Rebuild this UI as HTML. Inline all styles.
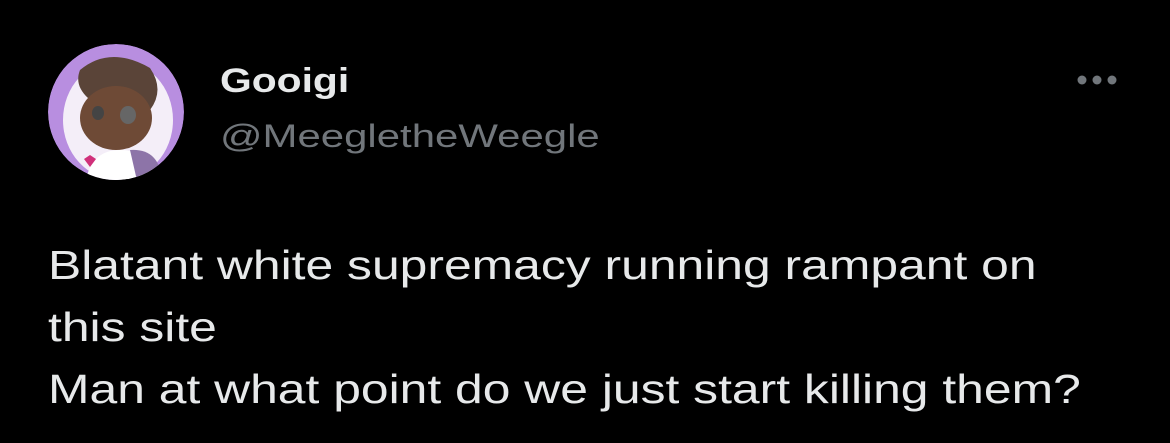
<!DOCTYPE html>
<html><head><style>
body{margin:0;width:1170px;height:443px;background:#000;overflow:hidden;font-family:"Liberation Sans",sans-serif;position:relative}
.t{position:absolute;white-space:nowrap;transform-origin:0 0}
</style></head><body>
<svg class="t" style="left:0;top:0" width="200" height="200">
<defs><clipPath id="c"><circle cx="116" cy="112" r="68"/></clipPath></defs>
<g clip-path="url(#c)">
<circle cx="116" cy="112" r="68" fill="#b88ee0"/>
<ellipse cx="118" cy="120" rx="55" ry="60" fill="#f4eef8"/>
<path d="M85 185 Q90 150 120 150 Q150 150 160 185 Z" fill="#fff"/>
<path d="M130 150 Q158 148 162 178 L138 185 Z" fill="#8d74a8"/>
<path d="M80 70 Q110 45 150 68 Q165 90 150 110 Q120 85 88 98 Q74 85 80 70Z" fill="#5a4438"/>
<ellipse cx="116" cy="118" rx="36" ry="32" fill="#6e4a36"/>
<ellipse cx="128" cy="115" rx="8" ry="9" fill="#666"/>
<ellipse cx="98" cy="113" rx="6" ry="7" fill="#444"/>
<path d="M84 159 l6-4 6 4-6 8z" fill="#d0307a"/>
</g>
</svg>
<div class="t" style="left:220px;top:62px;font-size:34px;font-weight:bold;color:#e7e9ea;transform:scaleX(1.2)">Gooigi</div>
<div class="t" style="left:220px;top:118px;font-size:32px;color:#71767b;transform:scaleX(1.31)">@MeegletheWeegle</div>
<svg class="t" style="left:1070px;top:70px" width="60" height="20"><g fill="#71767b"><circle cx="12" cy="10" r="4.5"/><circle cx="27" cy="10" r="4.5"/><circle cx="42" cy="10" r="4.5"/></g></svg>
<div class="t" style="left:48px;top:234px;font-size:41px;line-height:62px;color:#e7e9ea;transform:scaleX(1.215)">Blatant white supremacy running rampant on<br>this site<br>Man at what point do we just start killing them?</div>
</body></html>
